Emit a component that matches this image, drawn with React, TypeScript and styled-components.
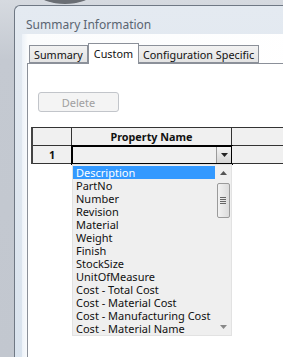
import * as React from 'react';
import styled, {createGlobalStyle} from 'styled-components';

const GlobalStyle = createGlobalStyle`
    html, body {
        margin: 0;
        padding: 0;
        background: #c6cbd3;
    }
`;

const Page = styled.div`
    position: relative;
    width: 283px;
    height: 357px;
    overflow: hidden;
    padding: 5px 0 0 14px;
    box-sizing: border-box;
    background: linear-gradient(#d6dae0, #c4c9d1 60px, #c2c7cf);
    font-family: 'Noto Sans', 'Open Sans', sans-serif;

    &::before {
        content: '';
        position: absolute;
        left: 40px;
        top: -14px;
        width: 50px;
        height: 18px;
        border-radius: 50%;
        background: #6a6e74;
    }
`;

const Window = styled.div`
    width: 300px;
    height: 380px;
    border: 1px solid #6f7884;
    border-right: none;
    border-radius: 6px 0 0 0;
    background: linear-gradient(#e4eaf1, #d8e2ed);
    display: flex;
    flex-direction: column;
`;

const TitleBar = styled.div`
    height: 28px;
    padding: 0 0 1px 11px;
    box-sizing: border-box;
    display: flex;
    align-items: flex-end;
    font-size: 12px;
    color: #5a6572;
`;

const Frame = styled.div`
    flex: 1;
    padding-left: 7px;
    display: flex;
`;

const Client = styled.div`
    flex: 1;
    background: linear-gradient(90deg, #edf2f8, #fbfcfd 6px, #ffffff);
    padding: 8px 0 0 5px;
    display: flex;
    flex-direction: column;
`;

const TabStrip = styled.div`
    display: flex;
    align-items: flex-end;
    padding-left: 2px;
    height: 21px;
    position: relative;
    z-index: 1;
`;

const Tab = styled.div<{$active?: boolean}>`
    height: ${p => (p.$active ? 21 : 18)}px;
    padding: 0 ${p => (p.$active ? 5 : 4)}px;
    margin-bottom: ${p => (p.$active ? -1 : 0)}px;
    box-sizing: border-box;
    border: 1px solid #8b9099;
    border-bottom: ${p => (p.$active ? 'none' : '1px solid #8b9099')};
    border-left: ${p => (p.$active ? '1px solid #8b9099' : 'none')};
    background: ${p => (p.$active ? '#ffffff' : 'linear-gradient(#f2f2f2, #e3e3e3)')};
    font-size: 10.8px;
    color: #111;
    display: flex;
    align-items: ${p => (p.$active ? 'flex-start' : 'center')};
    padding-top: ${p => (p.$active ? 2 : 0)}px;

    &:first-child {
        border-left: 1px solid #8b9099;
    }
`;

const TabPage = styled.div`
    flex: 1;
    border: 1px solid #8b9099;
    border-right: none;
    background: #ffffff;
    padding: 28px 0 0 3px;
    display: flex;
    flex-direction: column;
    align-items: flex-start;
`;

const Button = styled.div`
    margin-left: 7px;
    width: 81px;
    height: 20px;
    box-sizing: border-box;
    border: 1px solid #c2c5ca;
    border-radius: 3px;
    background: #f4f4f4;
    color: #a0a0a0;
    font-size: 11px;
    display: flex;
    align-items: center;
    justify-content: center;
`;

const Grid = styled.div`
    position: relative;
    margin-top: 15px;
    width: 260px;
    border-left: 2px solid #444;
    border-top: 1px solid #333;
`;

const GridRow = styled.div`
    display: grid;
    grid-template-columns: 39px 160px 1fr;
    height: 18px;
`;

const Cell = styled.div<{$head?: boolean; $bold?: boolean}>`
    border-right: 1px solid #333;
    border-bottom: 1px solid #333;
    background: ${p => (p.$head ? '#f0f0f0' : '#ffffff')};
    font-size: 10.8px;
    font-weight: ${p => (p.$bold ? 700 : 400)};
    color: #111;
    display: flex;
    align-items: center;
    justify-content: center;
`;

const Combo = styled.div`
    margin: -1px;
    border: 2px solid #000;
    background: #f0f0f0;
    display: flex;
    justify-content: flex-end;
    align-items: stretch;
`;

const ComboButton = styled.div`
    width: 14px;
    background: linear-gradient(#f4f4f4, #d4d4d4);
    border-left: 1px solid #9a9a9a;
    display: flex;
    align-items: center;
    justify-content: center;
`;

const DropList = styled.div`
    position: absolute;
    left: 39px;
    top: 36px;
    width: 158px;
    height: 170px;
    background: #efefef;
    border: 1px solid #e2e2e2;
    display: flex;
    z-index: 2;
`;

const Items = styled.div`
    flex: 1;
    padding-top: 1px;
`;

const Item = styled.div<{$selected?: boolean}>`
    height: 13px;
    line-height: 13px;
    padding-left: 3px;
    font-size: 11px;
    white-space: nowrap;
    color: ${p => (p.$selected ? '#ffffff' : '#111')};
    background: ${p => (p.$selected ? '#3399ff' : 'transparent')};
`;

const ScrollBar = styled.div`
    width: 16px;
    display: flex;
    flex-direction: column;
    align-items: center;
`;

const Arrow = styled.div`
    height: 16px;
    display: flex;
    align-items: center;
    justify-content: center;
`;

const Thumb = styled.div`
    margin-top: 2px;
    width: 13px;
    height: 35px;
    box-sizing: border-box;
    border: 1px solid #9a9a9a;
    border-radius: 2px;
    background: linear-gradient(90deg, #f2f2f2, #dcdcdc);
    display: flex;
    flex-direction: column;
    align-items: center;
    justify-content: center;
    gap: 1px;
`;

const Grip = styled.div`
    width: 6px;
    height: 1px;
    background: #666;
`;

const Track = styled.div`
    flex: 1;
`;

const items = [
    'Description',
    'PartNo',
    'Number',
    'Revision',
    'Material',
    'Weight',
    'Finish',
    'StockSize',
    'UnitOfMeasure',
    'Cost - Total Cost',
    'Cost - Material Cost',
    'Cost - Manufacturing Cost',
    'Cost - Material Name',
];

const Tri: React.FC<{up?: boolean; color?: string}> = ({up, color = '#222'}) => (
    <svg width="7" height="4" viewBox="0 0 7 4">
        <path d={up ? 'M0 4 L3.5 0 L7 4 Z' : 'M0 0 L7 0 L3.5 4 Z'} fill={color} />
    </svg>
);

const App: React.FC = () => {
    return (
        <Page>
            <GlobalStyle />
            <Window>
                <TitleBar>Summary Information</TitleBar>
                <Frame>
                    <Client>
                        <TabStrip>
                            <Tab>Summary</Tab>
                            <Tab $active>Custom</Tab>
                            <Tab>Configuration Specific</Tab>
                        </TabStrip>
                        <TabPage>
                            <Button>Delete</Button>
                            <Grid>
                                <GridRow>
                                    <Cell $head />
                                    <Cell $head $bold>Property Name</Cell>
                                    <Cell $head />
                                </GridRow>
                                <GridRow>
                                    <Cell $head $bold>1</Cell>
                                    <Combo>
                                        <ComboButton>
                                            <Tri />
                                        </ComboButton>
                                    </Combo>
                                    <Cell $head />
                                </GridRow>
                                <DropList>
                                    <Items>
                                        {items.map((it, i) => (
                                            <Item key={it} $selected={i === 0}>
                                                {it}
                                            </Item>
                                        ))}
                                    </Items>
                                    <ScrollBar>
                                        <Arrow>
                                            <Tri up color="#555" />
                                        </Arrow>
                                        <Thumb>
                                            <Grip />
                                            <Grip />
                                            <Grip />
                                            <Grip />
                                        </Thumb>
                                        <Track />
                                        <Arrow>
                                            <Tri color="#888" />
                                        </Arrow>
                                    </ScrollBar>
                                </DropList>
                            </Grid>
                        </TabPage>
                    </Client>
                </Frame>
            </Window>
        </Page>
    );
};

export default App;
